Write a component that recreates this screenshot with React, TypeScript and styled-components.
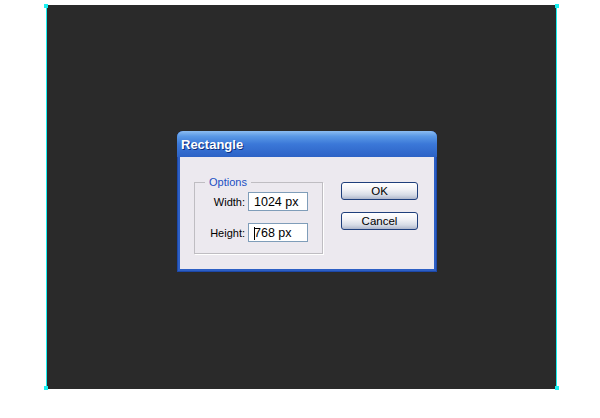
import styled, { createGlobalStyle } from "styled-components";

const Global = createGlobalStyle`
  html, body { margin: 0; padding: 0; background: #ffffff; }
  body { font-family: Tahoma, "Liberation Sans", sans-serif; }
`;

const Page = styled.div`
  width: 600px;
  height: 418px;
  padding: 5px 0 0 46px;
  box-sizing: border-box;
`;

const Canvas = styled.div`
  position: relative;
  width: 511px;
  height: 384px;
  background: #2a2a2a;
  border-left: 1px solid #19f0f0;
  border-right: 1px solid #19f0f0;
  box-sizing: border-box;
  display: flex;
  align-items: flex-start;
  justify-content: flex-start;
  padding: 126px 0 0 130px;
`;

const Handle = styled.div<{ $top?: boolean; $left?: boolean }>`
  position: absolute;
  width: 4px;
  height: 4px;
  background: #19f0f0;
  ${({ $top }) => ($top ? "top: -1px;" : "bottom: -1px;")}
  ${({ $left }) => ($left ? "left: -3px;" : "right: -3px;")}
`;

const Dialog = styled.div`
  width: 260px;
  height: 141px;
  box-sizing: border-box;
  border-radius: 6px 6px 0 0;
  background: #2d5fc4;
  padding: 0 3px 3px 3px;
  display: flex;
  flex-direction: column;
  box-shadow: inset 0 0 0 1px #1d48a8;
`;

const TitleBar = styled.div`
  height: 26px;
  margin: 0 -3px;
  border-radius: 6px 6px 0 0;
  background: linear-gradient(#8cbdf2 0%, #5a99e6 20%, #3b78d8 50%, #2c62c6 100%);
  display: flex;
  align-items: center;
  padding-left: 4px;
  color: #ffffff;
  font-family: "Liberation Sans", sans-serif;
  font-weight: bold;
  font-size: 13px;
  text-shadow: 1px 1px 0 #0c2f80;
`;

const Body = styled.div`
  flex: 1;
  background: #ece9ef;
  display: flex;
  padding: 19px 0 0 14px;
  gap: 18px;
`;

const Group = styled.fieldset`
  margin: 0;
  width: 129px;
  height: 78px;
  box-sizing: border-box;
  border: 1px solid #bfbdc2;
  box-shadow: 1px 1px 0 #fff;
  padding: 4px 0 0 0;
  display: flex;
  flex-direction: column;
  gap: 12px;
`;

const Legend = styled.legend`
  color: #1b4fc3;
  font-size: 11px;
  font-family: "Liberation Sans", sans-serif;
  padding: 0 4px;
  margin-left: 10px;
`;

const Field = styled.div`
  display: flex;
  align-items: center;
  justify-content: flex-end;
  padding-right: 14px;
  gap: 3px;
`;

const Label = styled.span`
  font-size: 11px;
  font-family: "Liberation Sans", sans-serif;
  color: #000;
`;

const Input = styled.div`
  width: 60px;
  height: 19px;
  box-sizing: border-box;
  border: 1px solid #7f9db9;
  background: #fff;
  font-size: 12.5px;
  font-family: "Liberation Sans", sans-serif;
  padding: 1px 0 0 5px;
  display: flex;
  align-items: center;
`;

const Caret = styled.span`
  display: inline-block;
  width: 1px;
  height: 13px;
  background: #000;
  margin-right: -1px;
`;

const Buttons = styled.div`
  display: flex;
  flex-direction: column;
  gap: 12px;
  margin-top: 6px;
`;

const Button = styled.div`
  width: 77px;
  height: 18px;
  box-sizing: border-box;
  border: 1px solid #1f3f7c;
  border-radius: 3px;
  background: linear-gradient(#ffffff 0%, #f2f2f6 40%, #d6dbe6 75%, #aeb6cb 100%);
  display: flex;
  align-items: center;
  justify-content: center;
  font-size: 11.5px;
  font-family: "Liberation Sans", sans-serif;
  color: #000;
`;

export default function App() {
  return (
    <Page>
      <Global />
      <Canvas>
        <Handle $top $left />
        <Handle $top />
        <Handle $left />
        <Handle />
        <Dialog>
          <TitleBar>Rectangle</TitleBar>
          <Body>
            <Group>
              <Legend>Options</Legend>
              <Field>
                <Label>Width:</Label>
                <Input>1024 px</Input>
              </Field>
              <Field>
                <Label>Height:</Label>
                <Input>
                  <Caret />
                  768 px
                </Input>
              </Field>
            </Group>
            <Buttons>
              <Button>OK</Button>
              <Button>Cancel</Button>
            </Buttons>
          </Body>
        </Dialog>
      </Canvas>
    </Page>
  );
}
